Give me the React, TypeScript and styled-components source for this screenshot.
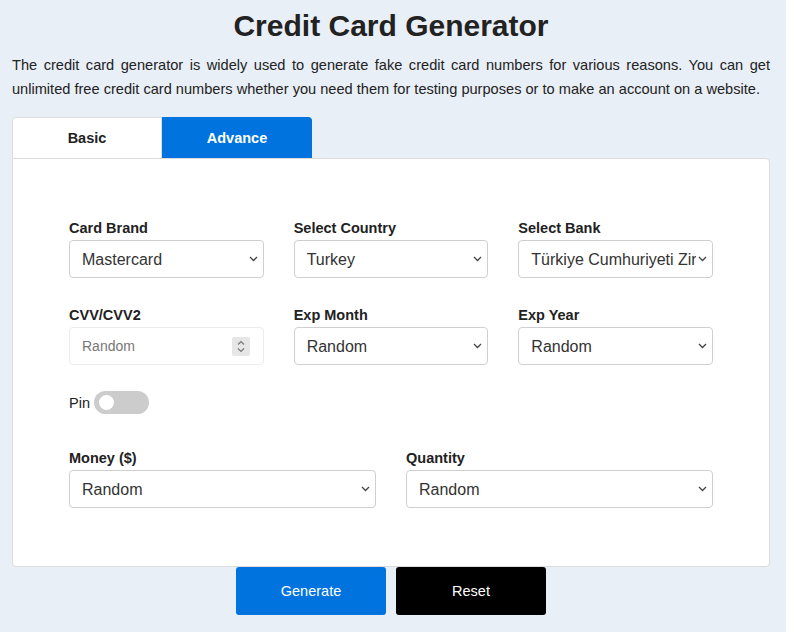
import styled, { createGlobalStyle } from 'styled-components';

const GlobalStyle = createGlobalStyle`
  html, body {
    margin: 0;
    padding: 0;
    background: #ffffff;
  }
  * {
    box-sizing: border-box;
  }
`;

// page wrapper
const Page = styled.div`
  width: 786px;
  background: #e9eff7;
  padding: 10px 16px 17px 12px;
  font-family: 'Liberation Sans', Arial, sans-serif;
  color: #222;
`;

const Title = styled.h1`
  margin: 0;
  text-align: center;
  font-size: 30px;
  line-height: 32px;
  font-weight: 700;
  color: #222;
`;

const Intro = styled.p`
  margin: 11px 0 16px;
  font-size: 14.6px;
  line-height: 24px;
  text-align: justify;
  color: #222;
`;

const Tabs = styled.div`
  display: flex;
`;

const Tab = styled.button<{ $active?: boolean }>`
  width: 150px;
  height: 41px;
  border: 1px solid ${p => (p.$active ? '#0073de' : '#dcdcdc')};
  border-bottom: none;
  background: ${p => (p.$active ? '#0073de' : '#ffffff')};
  color: ${p => (p.$active ? '#ffffff' : '#222')};
  font-family: inherit;
  font-size: 14.5px;
  font-weight: 700;
  padding: 0;
  cursor: pointer;

  &:first-child {
    border-top-left-radius: 4px;
  }
  &:last-child {
    border-top-right-radius: 4px;
  }
`;

const Panel = styled.div`
  background: #ffffff;
  border: 1px solid #dcdcdc;
  border-radius: 0 4px 4px 4px;
  padding: 59px 56px 58px;
`;

const Grid = styled.div<{ $cols: number }>`
  display: grid;
  grid-template-columns: repeat(${p => p.$cols}, 1fr);
  column-gap: 30px;
  row-gap: 27px;
`;

const Field = styled.div`
  display: flex;
  flex-direction: column;
  min-width: 0;
`;

const Label = styled.label`
  font-size: 14.5px;
  line-height: 20px;
  font-weight: 700;
  color: #222;
  margin-bottom: 2px;
`;

const SelectWrap = styled.div`
  position: relative;
`;

const Select = styled.select`
  appearance: none;
  -webkit-appearance: none;
  width: 100%;
  height: 38px;
  border: 1px solid #cfcfcf;
  border-radius: 4px;
  background: #ffffff;
  color: #333;
  font-family: inherit;
  font-size: 16px;
  padding: 0 16px 0 12px;
  outline: none;
`;

// chevron drawn over the right end of the select
const Chevron = styled.svg`
  position: absolute;
  right: 6px;
  top: 50%;
  margin-top: -3px;
  pointer-events: none;
`;

const NumberBox = styled.div`
  display: flex;
  align-items: center;
  height: 38px;
  border: 1px solid #ececec;
  border-radius: 4px;
  background: #ffffff;
  padding: 0 13px 0 12px;
`;

const NumberInput = styled.input`
  flex: 1;
  min-width: 0;
  border: none;
  outline: none;
  background: transparent;
  font-family: inherit;
  font-size: 14px;
  color: #333;
  padding: 0;

  &::placeholder {
    color: #777;
  }
`;

const Spinner = styled.span`
  display: flex;
  align-items: center;
  justify-content: center;
  width: 18px;
  height: 19px;
  background: #e6e6e6;
  border-radius: 2px;
`;

const PinRow = styled.div`
  display: flex;
  align-items: center;
  gap: 4px;
  margin: 26px 0 34px;
  font-size: 14.5px;
  color: #222;
`;

const Toggle = styled.span`
  display: flex;
  align-items: center;
  width: 55px;
  height: 23px;
  border-radius: 12px;
  background: #cccccc;
  padding-left: 5px;
`;

const Knob = styled.span`
  width: 15px;
  height: 15px;
  border-radius: 50%;
  background: #ffffff;
`;

const Actions = styled.div`
  display: flex;
  justify-content: center;
  gap: 10px;
`;

const ActionButton = styled.button<{ $dark?: boolean }>`
  width: 150px;
  height: 48px;
  border: none;
  border-radius: 3px;
  background: ${p => (p.$dark ? '#000000' : '#0073de')};
  color: #ffffff;
  font-family: inherit;
  font-size: 14.5px;
  cursor: pointer;
`;

function Dropdown({ options, value }: { options: string[]; value?: string }) {
  return (
    <SelectWrap>
      <Select defaultValue={value ?? options[0]}>
        {options.map(o => (
          <option key={o}>{o}</option>
        ))}
      </Select>
      <Chevron width="9" height="6" viewBox="0 0 9 6" fill="none" stroke="#444" strokeWidth="1.3">
        <path d="M1 1 L4.5 4.5 L8 1" />
      </Chevron>
    </SelectWrap>
  );
}

export default function App() {
  return (
    <>
      <GlobalStyle />
      <Page>
        <Title>Credit Card Generator</Title>
        <Intro>
          The credit card generator is widely used to generate fake credit card numbers for various reasons. You can get
          unlimited free credit card numbers whether you need them for testing purposes or to make an account on a website.
        </Intro>

        <Tabs>
          <Tab>Basic</Tab>
          <Tab $active>Advance</Tab>
        </Tabs>

        <Panel>
          <Grid $cols={3}>
            <Field>
              <Label>Card Brand</Label>
              <Dropdown options={['Visa', 'Mastercard', 'American Express']} value="Mastercard" />
            </Field>
            <Field>
              <Label>Select Country</Label>
              <Dropdown options={['United States', 'Turkey']} value="Turkey" />
            </Field>
            <Field>
              <Label>Select Bank</Label>
              <Dropdown options={['Türkiye Cumhuriyeti Ziraat Bankası']} />
            </Field>
            <Field>
              <Label>CVV/CVV2</Label>
              <NumberBox>
                <NumberInput placeholder="Random" />
                <Spinner>
                  <svg width="10" height="15" viewBox="0 0 10 15" fill="none" stroke="#777" strokeWidth="1.2">
                    <path d="M2 5.5 L5 2.5 L8 5.5" />
                    <path d="M2 9.5 L5 12.5 L8 9.5" />
                  </svg>
                </Spinner>
              </NumberBox>
            </Field>
            <Field>
              <Label>Exp Month</Label>
              <Dropdown options={['Random']} />
            </Field>
            <Field>
              <Label>Exp Year</Label>
              <Dropdown options={['Random']} />
            </Field>
          </Grid>

          <PinRow>
            Pin
            <Toggle>
              <Knob />
            </Toggle>
          </PinRow>

          <Grid $cols={2}>
            <Field>
              <Label>Money ($)</Label>
              <Dropdown options={['Random']} />
            </Field>
            <Field>
              <Label>Quantity</Label>
              <Dropdown options={['Random']} />
            </Field>
          </Grid>
        </Panel>

        <Actions>
          <ActionButton>Generate</ActionButton>
          <ActionButton $dark>Reset</ActionButton>
        </Actions>
      </Page>
    </>
  );
}
